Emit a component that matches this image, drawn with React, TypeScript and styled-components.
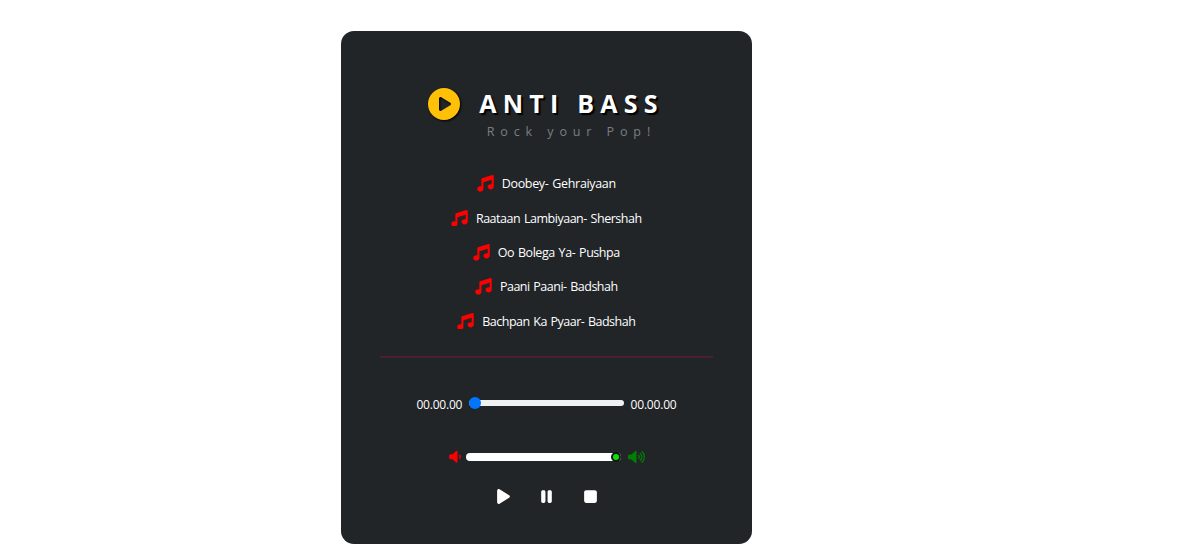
import React from 'react';
import styled, { createGlobalStyle } from 'styled-components';
import {
  FaCirclePlay,
  FaMusic,
  FaPause,
  FaPlay,
  FaStop,
  FaVolumeHigh,
  FaVolumeLow,
} from 'react-icons/fa6';

const GlobalStyle = createGlobalStyle`
  * { box-sizing: border-box; }
  body {
    margin: 0;
    background: #fff;
    font-family: 'Segoe UI', 'Open Sans', 'Noto Sans', sans-serif;
  }
  svg { display: block; flex: none; }
`;

const Page = styled.main`
  height: 557px;
  padding: 31px 0 0 340.6px;
  overflow: hidden;
`;

const Player = styled.section`
  width: 411.4px;
  height: 513.4px;
  padding: 57px 39px 0;
  border-radius: 13px;
  background: #212528;
  color: #fff;
  display: flex;
  flex-direction: column;
`;

const Header = styled.header`
  height: 87.3px;
  display: flex;
  padding-left: 48.6px;
  gap: 19px;
`;

const Logo = styled(FaCirclePlay)`
  width: 32px;
  height: 32px;
  color: #ffc107;
  filter: drop-shadow(1.5px 1.5px 1px #000);
`;

const Title = styled.h1`
  margin: -1px 0 0;
  font-size: 25px;
  line-height: 32px;
  font-weight: 700;
  letter-spacing: 6.25px;
  text-shadow: 2px 2px 1px #000;
  white-space: nowrap;
`;

const Tagline = styled.p`
  margin: 3px 0 0 7.5px;
  font-size: 12.5px;
  line-height: 20px;
  letter-spacing: 5.9px;
  color: #7b7e81;
  white-space: nowrap;
`;

const Songs = styled.ul`
  list-style: none;
  margin: 0;
  padding: 0;
`;

const Song = styled.li<{ $spacing: number }>`
  height: 34.4px;
  display: flex;
  align-items: flex-start;
  justify-content: center;
  gap: 8px;
  font-size: 12.5px;
  line-height: 18px;
  letter-spacing: ${(p) => p.$spacing}px;
  word-spacing: 1px;
  white-space: nowrap;

  svg { width: 17px; height: 16.5px; color: #f00; }
`;

const Divider = styled.hr`
  width: 100%;
  height: 2px;
  margin: 9px 0 0;
  border: 0;
  background: #4b202b;
`;

const Timeline = styled.div`
  margin: 36.5px 0 0 36.8px;
  height: 18px;
  display: flex;
  align-items: center;
`;

const Time = styled.span`
  width: 46px;
  font-size: 12px;
  line-height: 18px;
  letter-spacing: -0.2px;
  white-space: nowrap;
  padding-top: 3px;
`;

const SeekTrack = styled.div`
  width: 155px;
  height: 6px;
  margin: -1px 7px 0 6.2px;
  border-radius: 3px;
  background: #eff1f3;
  display: flex;
  align-items: center;
`;

const SeekThumb = styled.i`
  width: 12px;
  height: 12px;
  border-radius: 50%;
  background: #0075ff;
`;

const Volume = styled.div`
  height: 18px;
  margin: 35px 0 0 68px;
  display: flex;
  align-items: center;
`;

const Quiet = styled(FaVolumeLow)`
  width: 14px;
  height: 13.5px;
  color: #f00;
`;

const Loud = styled(FaVolumeHigh)`
  width: 17px;
  height: 14px;
  margin-left: 7px;
  color: #008000;
`;

const VolumeTrack = styled.div`
  width: 155px;
  height: 8px;
  margin-left: 4px;
  border-radius: 4px;
  background: #fff;
  display: flex;
  align-items: center;
  justify-content: flex-end;
`;

const VolumeThumb = styled.i`
  width: 10px;
  height: 10px;
  border: 2px solid #101a12;
  border-radius: 50%;
  background: #0be00b;
`;

const Controls = styled.div`
  margin: 22.5px 0 0 115px;
  display: flex;
  align-items: center;
  gap: 26.5px;

  svg { width: 17px; height: 17px; }
`;

const songs = [
  { name: 'Doobey- Gehraiyaan', spacing: -0.34 },
  { name: 'Raataan Lambiyaan- Shershah', spacing: -0.48 },
  { name: 'Oo Bolega Ya- Pushpa', spacing: -0.44 },
  { name: 'Paani Paani- Badshah', spacing: -0.51 },
  { name: 'Bachpan Ka Pyaar- Badshah', spacing: -0.52 },
];

export default function App() {
  return (
    <Page>
      <GlobalStyle />
      <Player>
        <Header>
          <Logo />
          <div>
            <Title>ANTI BASS</Title>
            <Tagline>Rock your Pop!</Tagline>
          </div>
        </Header>
        <Songs>
          {songs.map((song) => (
            <Song key={song.name} $spacing={song.spacing}>
              <FaMusic />
              <span>{song.name}</span>
            </Song>
          ))}
        </Songs>
        <Divider />
        <Timeline>
          <Time>00.00.00</Time>
          <SeekTrack>
            <SeekThumb />
          </SeekTrack>
          <Time>00.00.00</Time>
        </Timeline>
        <Volume>
          <Quiet />
          <VolumeTrack>
            <VolumeThumb />
          </VolumeTrack>
          <Loud />
        </Volume>
        <Controls>
          <FaPlay />
          <FaPause />
          <FaStop />
        </Controls>
      </Player>
    </Page>
  );
}
